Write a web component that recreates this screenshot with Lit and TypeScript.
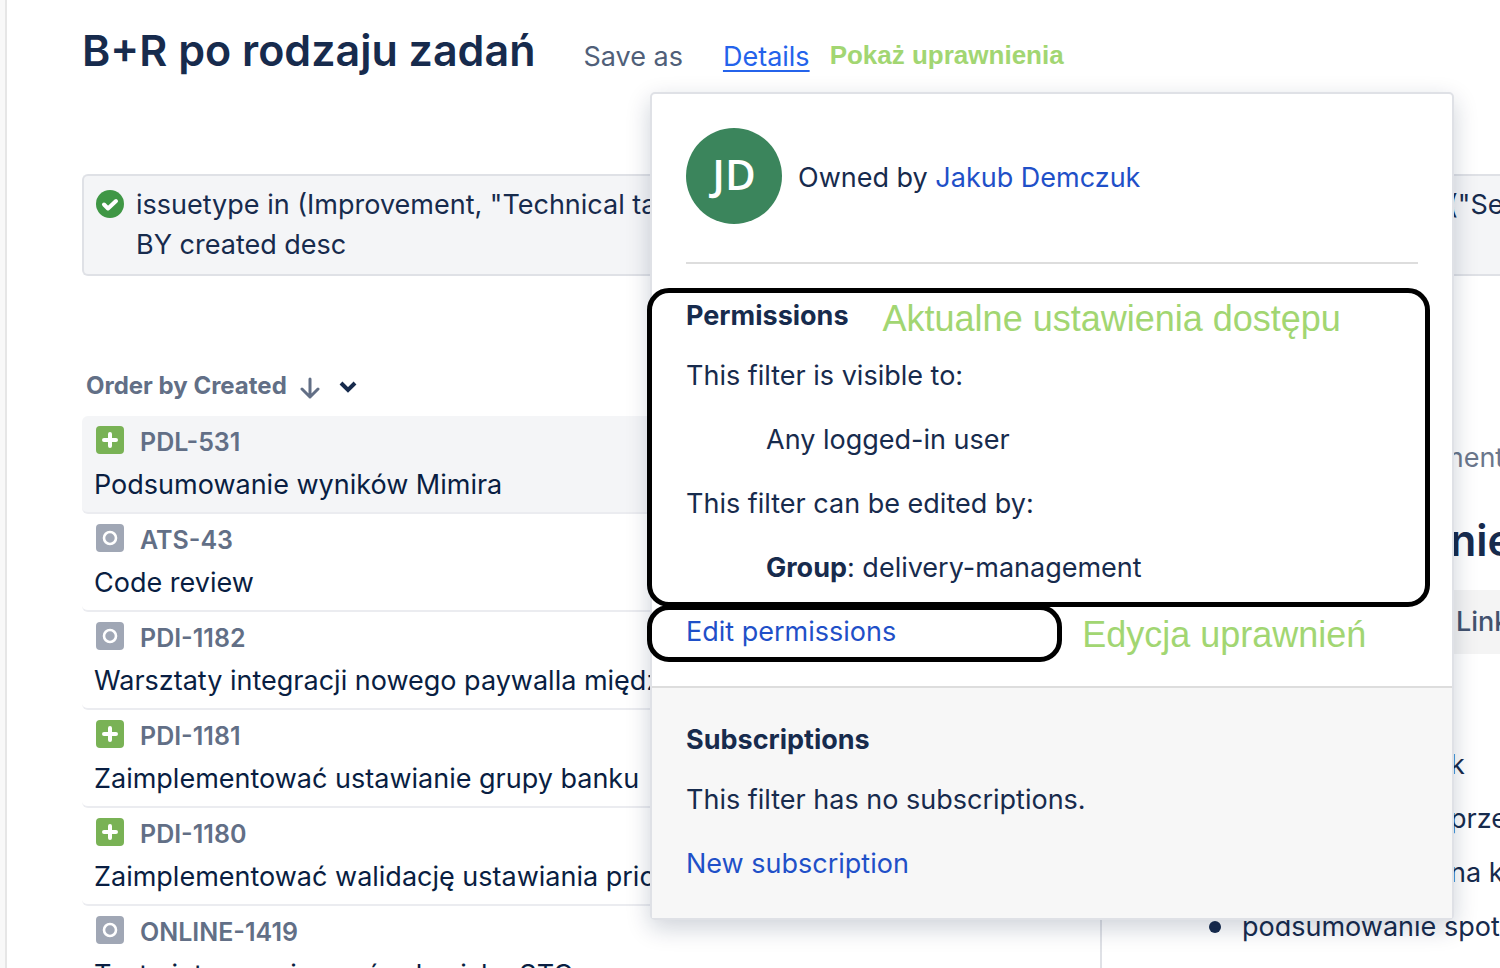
import { LitElement, html, css, svg } from "lit";
import { customElement } from "lit/decorators.js";

interface Issue {
  key: string;
  summary: string;
  kind: "story" | "task";
}

const ISSUES: Issue[] = [
  { key: "PDL-531", summary: "Podsumowanie wyników Mimira", kind: "story" },
  { key: "ATS-43", summary: "Code review", kind: "task" },
  { key: "PDI-1182", summary: "Warsztaty integracji nowego paywalla między", kind: "task" },
  { key: "PDI-1181", summary: "Zaimplementować ustawianie grupy banku", kind: "story" },
  { key: "PDI-1180", summary: "Zaimplementować walidację ustawiania prio", kind: "story" },
  { key: "ONLINE-1419", summary: "Testy integracyjne w środowisku STG", kind: "task" },
];

const storyIcon = svg`<rect width="28" height="28" rx="4" fill="#79b255"/><path d="M14 8v12M8 14h12" stroke="#fff" stroke-width="4" stroke-linecap="round"/>`;
const taskIcon = svg`<rect width="28" height="28" rx="4" fill="#a0a7b5"/><circle cx="14" cy="14" r="6" fill="none" stroke="#fff" stroke-width="2.6"/>`;

@customElement("filter-details")
export class FilterDetails extends LitElement {
  static styles = css`
    :host {
      display: block;
      box-sizing: border-box;
      border: 2px solid #dfe1e6;
      border-radius: 5px;
      background: #fff;
      box-shadow: 0 8px 24px rgba(9, 30, 66, 0.2);
    }
    .top { padding: 34px 34px 31px; }
    .owner {
      display: flex;
      align-items: center;
      gap: 16px;
      padding-bottom: 38px;
      border-bottom: 2px solid #ddd;
    }
    .owner p { padding-top: 4px; }
    .avatar {
      display: grid;
      place-items: center;
      box-sizing: border-box;
      width: 96px;
      height: 96px;
      padding-bottom: 4px;
      border-radius: 50%;
      background: #3b855c;
      color: #fff;
      font: 600 42px/48px "Open Sans", "Noto Sans", sans-serif;
    }
    p, h2 { margin: 0; font-size: 27px; line-height: 40px; font-weight: 400; }
    h2, b { font-weight: 700; }
    a { color: #1f50c8; text-decoration: none; }
    .permissions {
      position: relative;
      display: flex;
      flex-direction: column;
      gap: 24px;
      padding-top: 32px;
    }
    .heading { display: flex; gap: 34px; margin-bottom: -7px; }
    .indented { padding-left: 80px; }
    .note {
      padding-top: 3px;
      color: #a2d672;
      font: 36px/40px "Liberation Sans", Arial, sans-serif;
    }
    .edit { position: relative; display: flex; gap: 186px; padding-top: 24px; }
    .frame {
      position: absolute;
      box-sizing: border-box;
      border: 5px solid #000;
      border-radius: 22px;
      pointer-events: none;
    }
    .frame-permissions { inset: 24px -12px -19px -39px; }
    .frame-edit { top: 17px; bottom: -7px; left: -39px; width: 415px; }
    .bottom {
      display: flex;
      flex-direction: column;
      gap: 24px;
      padding: 32px 34px 34px;
      border-top: 2px solid #ddd;
      background: #f7f7f7;
    }
    .bottom h2 { margin-bottom: -4px; }
  `;

  render() {
    return html`
      <div class="top">
        <div class="owner">
          <span class="avatar">JD</span>
          <p>Owned by <a href="#owner">Jakub Demczuk</a></p>
        </div>
        <section class="permissions">
          <div class="heading"><h2>Permissions</h2><span class="note">Aktualne ustawienia dostępu</span></div>
          <p>This filter is visible to:</p>
          <p class="indented">Any logged-in user</p>
          <p>This filter can be edited by:</p>
          <p class="indented"><b>Group</b>: delivery-management</p>
          <span class="frame frame-permissions"></span>
        </section>
        <div class="edit">
          <p><a href="#edit">Edit permissions</a></p>
          <span class="note">Edycja uprawnień</span>
          <span class="frame frame-edit"></span>
        </div>
      </div>
      <section class="bottom">
        <h2>Subscriptions</h2>
        <p>This filter has no subscriptions.</p>
        <p><a href="#new">New subscription</a></p>
      </section>
    `;
  }
}

@customElement("app-root")
export class AppRoot extends LitElement {
  static styles = css`
    :host {
      display: flex;
      height: 100vh;
      overflow: hidden;
      background: #fff;
      color: #172b4d;
      font: 27px/40px Inter, "Noto Sans", sans-serif;
    }
    * { box-sizing: border-box; }
    .rail { flex: none; width: 7px; background: #f8f8f8; border-right: 2px solid #e6e6e6; }
    main {
      position: relative;
      flex: 1;
      min-width: 0;
      display: flex;
      flex-direction: column;
      padding: 20px 0 0 75px;
    }
    header { display: flex; align-items: baseline; height: 60px; white-space: nowrap; }
    h1 { margin: 0 48px 0 0; font-size: 43px; line-height: 60px; font-weight: 600; }
    .save {
      padding: 0;
      border: 0;
      background: none;
      color: #505f79;
      font: inherit;
    }
    .details { margin: 0 20px 0 40px; color: #2463eb; text-underline-offset: 4px; }
    .hint {
      align-self: flex-end;
      color: #a2d672;
      font: 700 26px/50px "Liberation Sans", Arial, sans-serif;
    }
    .query {
      display: flex;
      margin-top: 94px;
      padding: 9px 0 9px 12px;
      gap: 12px;
      border: 2px solid #dfe1e6;
      border-right: 0;
      border-radius: 6px 0 0 6px;
      background: #f4f5f7;
    }
    .query svg { flex: none; margin-top: 4px; }
    .lines { flex: 1; min-width: 0; }
    .line { display: flex; justify-content: space-between; white-space: nowrap; }
    .tail { flex: none; width: 50px; overflow: hidden; white-space: nowrap; }
    .line .tail { width: 52px; }
    .body { flex: 1; min-height: 0; display: flex; align-items: stretch; }
    .results { flex: 1; min-width: 0; padding-top: 90px; }
    .order {
      display: flex;
      align-items: center;
      height: 40px;
      margin-bottom: 10px;
      padding: 0 4px;
      border: 0;
      background: none;
      color: #626f86;
      font: 700 24px/40px Inter, sans-serif;
    }
    .order svg { margin-top: 4px; }
    .order .arrow { margin-left: 12px; }
    .order .chevron { margin-left: 18px; }
    ul { margin: 0; padding: 0; list-style: none; }
    .issue {
      display: block;
      height: 98px;
      padding: 8px 12px 0;
      border-bottom: 2px solid #ebecf0;
      border-radius: 6px;
      color: #091e42;
      text-decoration: none;
      white-space: nowrap;
      overflow: hidden;
    }
    .issue.selected { background: #f4f5f7; }
    .key {
      display: flex;
      align-items: center;
      gap: 16px;
      padding-left: 2px;
      height: 36px;
      color: #626f86;
      font-size: 25px;
      font-weight: 600;
    }
    .key svg { margin-bottom: 4px; }
    .summary { display: block; height: 48px; line-height: 50px; }
    .pane {
      flex: none;
      width: 400px;
      display: flex;
      flex-direction: column;
      align-items: flex-end;
      border-left: 2px solid #dfe1e6;
      padding-top: 162px;
      overflow: hidden;
    }
    .crumb { width: 60px; color: #6b778c; }
    .pane h3 { margin: 32px 0 20px; font-size: 43px; line-height: 60px; font-weight: 600; }
    .link {
      width: 80px;
      height: 64px;
      margin-bottom: 84px;
      padding: 0 0 0 36px;
      border: 0;
      background: #f4f4f4;
      color: #42526e;
      font: 500 27px/40px Inter, sans-serif;
      text-align: left;
      white-space: nowrap;
      overflow: hidden;
    }
    .notes { align-self: stretch; padding-left: 107px; }
    .notes li { display: flex; align-items: center; height: 54px; white-space: nowrap; }
    .notes li::before {
      content: "";
      flex: none;
      width: 12px;
      height: 12px;
      margin-right: 21px;
      border-radius: 50%;
      background: currentColor;
    }
    .notes .tail { margin-left: auto; }
    .popup { position: absolute; top: 92px; left: 643px; width: 804px; }
  `;

  render() {
    return html`
      <div class="rail"></div>
      <main>
        <header>
          <h1>B+R po rodzaju zadań</h1>
          <button class="save">Save as</button>
          <a class="details" href="#details">Details</a>
          <span class="hint">Pokaż uprawnienia</span>
        </header>
        <div class="query">
          <svg width="28" height="30" viewBox="0 0 28 30">
            <circle cx="14" cy="15" r="14" fill="#3f9745" />
            <path d="M8 15.500l4 4 8-7.500" fill="none" stroke="#fff" stroke-width="4" stroke-linecap="round" stroke-linejoin="round" />
          </svg>
          <div class="lines">
            <div class="line"><span>issuetype in (Improvement, "Technical task"</span><span class="tail">("Sele</span></div>
            <div class="line">BY created desc</div>
          </div>
        </div>
        <div class="body">
          <div class="results">
            <button class="order">
              Order by Created
              <svg class="arrow" width="22" height="22" viewBox="0 0 22 22" fill="none" stroke="#626f86" stroke-width="3" stroke-linecap="round" stroke-linejoin="round"><path d="M11 2v18M3 12l8 8 8-8" /></svg>
              <svg class="chevron" width="18" height="18" viewBox="0 0 18 18" fill="none" stroke="#172b4d" stroke-width="4" stroke-linejoin="miter"><path d="M2 4l7 7 7-7" /></svg>
            </button>
            <ul>
              ${ISSUES.map(
                (issue, i) => html`<li>
                  <a class="issue ${i === 0 ? "selected" : ""}" href="#${issue.key}">
                    <span class="key">
                      <svg width="28" height="28" viewBox="0 0 28 28">${issue.kind === "story" ? storyIcon : taskIcon}</svg>
                      ${issue.key}
                    </span>
                    <span class="summary">${issue.summary}</span>
                  </a>
                </li>`
              )}
            </ul>
          </div>
          <div class="pane">
            <span class="crumb">ment</span>
            <h3 class="tail">nie</h3>
            <button class="link">Link</button>
            <ul class="notes">
              <li><span class="tail">k</span></li>
              <li><span class="tail">prze</span></li>
              <li><span class="tail">na k</span></li>
              <li>podsumowanie spotkania</li>
            </ul>
          </div>
        </div>
        <filter-details class="popup"></filter-details>
      </main>
    `;
  }
}
